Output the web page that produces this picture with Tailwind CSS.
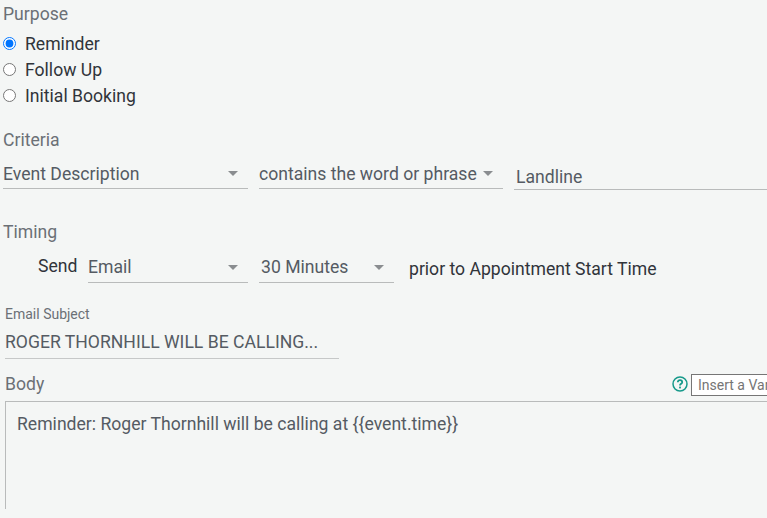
<!DOCTYPE html>
<html lang="en">
<head>
    <meta charset="UTF-8">
    <title>Reminder Settings</title>
    <script src="https://cdn.jsdelivr.net/npm/@tailwindcss/browser@4"></script>
</head>
<body class="bg-[#f4f6f5]">
    <div class="w-[767px] h-[518px] overflow-hidden font-['Roboto',sans-serif] text-[17.6px] leading-[26px] text-[#555b63]">

        <div class="pl-[3px] pt-px h-[26px] text-[#6b7076]">Purpose</div>
        <div class="pl-[3px] pt-[4px] text-[#30343a]">
            <label class="flex items-center h-[26px]">
                <input type="radio" name="purpose" checked class="w-[13px] h-[13px] m-0 accent-[#0075ff]">
                <span class="ml-[9px] pt-[2px]">Reminder</span>
            </label>
            <label class="flex items-center h-[26px]">
                <input type="radio" name="purpose" class="w-[13px] h-[13px] m-0">
                <span class="ml-[9px] pt-[2px]">Follow Up</span>
            </label>
            <label class="flex items-center h-[26px]">
                <input type="radio" name="purpose" class="w-[13px] h-[13px] m-0">
                <span class="ml-[9px] pt-[2px]">Initial Booking</span>
            </label>
        </div>

        <div class="pl-[3px] mt-[19px] h-[26px] text-[#6b7076]">Criteria</div>
        <div class="flex mt-[5px] pl-[3px]">
            <div class="w-[245px] h-[31px] border-b border-[#b9bbbb] flex items-center justify-between pr-[10px]">
                <span class="pt-[2px]">Event Description</span>
                <svg width="10" height="5" viewBox="0 0 10 5"><path d="M0 0h10L5 5z" fill="#8a8d90"/></svg>
            </div>
            <div class="w-[244px] h-[31px] ml-[11px] border-b border-[#b9bbbb] flex items-center justify-between pr-[10px]">
                <span class="pt-[2px]">contains the word or phrase</span>
                <svg width="10" height="5" viewBox="0 0 10 5"><path d="M0 0h10L5 5z" fill="#8a8d90"/></svg>
            </div>
            <div class="flex-1 h-[32px] ml-[11px] pl-[2px] pt-[6px] border-b border-[#b9bbbb]">Landline</div>
        </div>

        <div class="pl-[3px] mt-[29px] h-[26px] text-[#6b7076]">Timing</div>
        <div class="flex mt-[7px] pl-[38px]">
            <span class="w-[50px] pt-px text-[#30343a]">Send</span>
            <div class="w-[160px] h-[31px] border-b border-[#b9bbbb] flex items-center justify-between pr-[10px]">
                <span>Email</span>
                <svg width="10" height="5" viewBox="0 0 10 5"><path d="M0 0h10L5 5z" fill="#8a8d90"/></svg>
            </div>
            <div class="w-[135px] h-[31px] ml-[11px] pl-[2px] border-b border-[#b9bbbb] flex items-center justify-between pr-[10px]">
                <span>30 Minutes</span>
                <svg width="10" height="5" viewBox="0 0 10 5"><path d="M0 0h10L5 5z" fill="#8a8d90"/></svg>
            </div>
            <span class="ml-[15px] pt-[4px] text-[#30343a]">prior to Appointment Start Time</span>
        </div>

        <div class="pl-[5px] mt-[21px] h-[20px] text-[14px] leading-[20px] text-[#6b7076]">Email Subject</div>
        <div class="ml-[5px] w-[334px] h-[35px] pt-[5px] border-b border-[#c6c8c8]">ROGER THORNHILL WILL BE CALLING...</div>

        <div class="flex items-center justify-between pl-[5px] h-[26px] mt-[12px]">
            <span class="text-[#6b7076]">Body</span>
            <div class="flex items-center w-[95px] shrink-0 overflow-hidden">
                <svg width="16" height="16" viewBox="0 0 16 16" fill="none" class="shrink-0">
                    <circle cx="8" cy="8" r="7" stroke="#16998a" stroke-width="1.5"/>
                    <path d="M5.8 6.2C5.8 5 6.8 4.2 8 4.2s2.2.8 2.2 2c0 1.6-2.2 1.6-2.2 3.2" stroke="#16998a" stroke-width="1.8"/>
                    <rect x="7.1" y="10.6" width="1.8" height="1.8" fill="#16998a"/>
                </svg>
                <div class="ml-[3px] mt-[2px] w-[90px] shrink-0 h-[22px] bg-white border border-[#767676] pl-[6px] text-[14px] leading-[20px] text-[#757575] whitespace-nowrap">Insert a Variable</div>
            </div>
        </div>
        <div class="ml-[5px] h-[108px] mt-[4px] border-t border-l border-[#b9bbbb] pl-[11px] pt-[9px]">Reminder: Roger Thornhill will be calling at {{event.time}}</div>
    </div>
</body>
</html>
